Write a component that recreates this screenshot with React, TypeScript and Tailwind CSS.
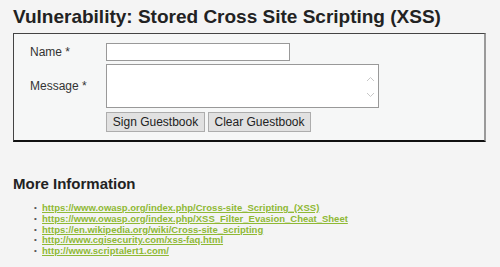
import React from "react";

const links = [
    "https://www.owasp.org/index.php/Cross-site_Scripting_(XSS)",
    "https://www.owasp.org/index.php/XSS_Filter_Evasion_Cheat_Sheet",
    "https://en.wikipedia.org/wiki/Cross-site_scripting",
    "http://www.cgisecurity.com/xss-faq.html",
    "http://www.scriptalert1.com/",
];

export default function App() {
    return (
        <div className="w-[500px] h-[267px] bg-[#f4f4f4] text-[#222] overflow-hidden" style={{ fontFamily: '"Liberation Sans", Arial, sans-serif' }}>
            <div className="pl-[13px] pt-[5px] pr-[14px]">
                <h1 className="text-[19px] font-bold leading-[24px] text-[#222]">Vulnerability: Stored Cross Site Scripting (XSS)</h1>
                <div className="mt-[4px] h-[109px] bg-[#f6f7f7] border-t border-l border-[#444] border-r-2 border-r-[#9a9a9a] border-b-2 border-b-[#111]">
                    <div className="pt-[9px] pl-[16px]">
                        <div className="flex items-center h-[18px]">
                            <span className="w-[76px] text-[12px] text-[#333]">Name *</span>
                            <input className="w-[184px] h-[18px] bg-white border border-[#999] outline-none" />
                        </div>
                        <div className="flex mt-[3px]">
                            <span className="w-[76px] text-[12px] text-[#333] pt-[13px]">Message *</span>
                            <div className="relative w-[273px] h-[44px] bg-white border border-[#999]">
                                <svg className="absolute right-[3px] top-[10px]" width="9" height="24" viewBox="0 0 9 24" fill="none" stroke="#c8c8c8" strokeWidth="1">
                                    <path d="M1 6 L4.5 2.5 L8 6" />
                                    <path d="M1 18 L4.5 21.5 L8 18" />
                                </svg>
                            </div>
                        </div>
                        <div className="flex gap-[3px] mt-[4px] ml-[76px]">
                            <button className="w-[99px] h-[20px] bg-[#e1e1e1] border border-[#adadad] text-[12px] text-[#222] leading-none">Sign Guestbook</button>
                            <button className="w-[103px] h-[20px] bg-[#e1e1e1] border border-[#adadad] text-[12px] text-[#222] leading-none">Clear Guestbook</button>
                        </div>
                    </div>
                </div>
                <h2 className="mt-[33px] text-[15px] font-bold leading-[18px] text-[#222]">More Information</h2>
                <ul className="mt-[9px] pl-[21px]">
                    {links.map((l) => (
                        <li key={l} className="flex items-center h-[10.8px] text-[9.5px] leading-[11px]">
                            <span className="w-[8px] text-[#555] text-[8px]">•</span>
                            <a href="#" className="font-bold text-[#8fb935] underline">{l}</a>
                        </li>
                    ))}
                </ul>
            </div>
        </div>
    );
}
